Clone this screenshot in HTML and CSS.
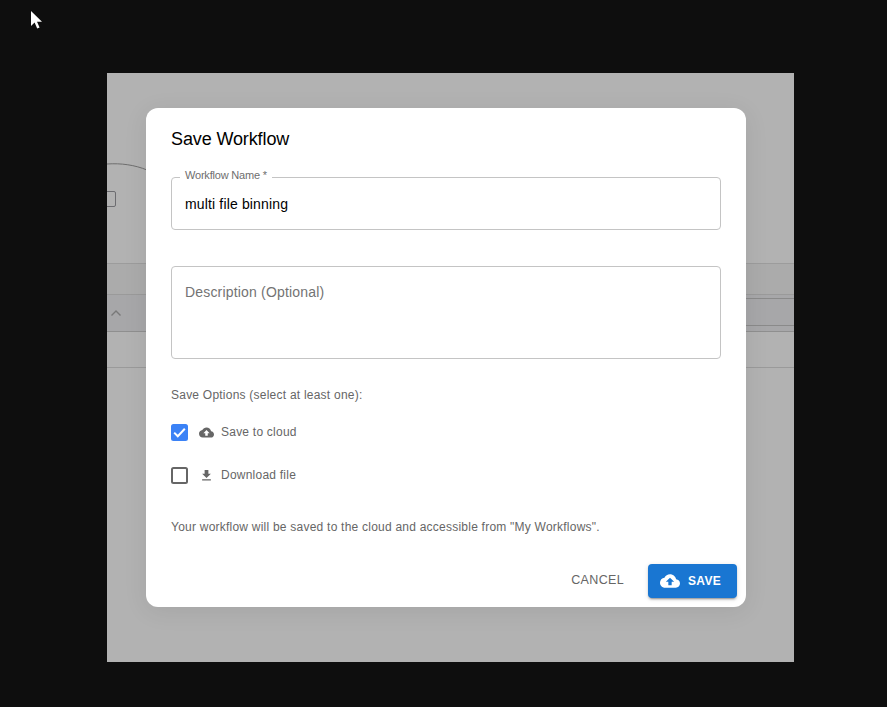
FILE: index.html
```html
<!DOCTYPE html>
<html lang="en">
<head>
<meta charset="utf-8">
<title>Save Workflow</title>
<link rel="stylesheet" href="styles.css">
</head>
<body>
<svg class="cursor" width="14" height="20" viewBox="0 0 14 20"><path d="M1 1v15l3.6-3.4 2.6 6 2.4-1-2.6-5.8h5z" fill="#fff"/></svg>
<div class="screen">
  <div class="backdrop-app">
    <svg class="edge" width="50" height="20" viewBox="0 0 50 20"><path d="M0 1C14 0 28 2 40 7" fill="none" stroke="#6e6e6e" stroke-width="1"/></svg>
    <div class="node"></div>
    <div class="band band-a"></div>
    <div class="band band-b"><svg class="chev" width="12" height="8" viewBox="0 0 12 8"><path d="M1.5 6.5 6 2l4.500 4.500" fill="none" stroke="#787878" stroke-width="1.400"/></svg></div>
    <div class="band band-c"></div>
    <div class="rail rail-top"></div>
    <div class="rail rail-bottom"></div>
  </div>
  <div class="dialog" role="dialog">
    <h2 class="title">Save Workflow</h2>
    <div class="field field-name">
      <span class="legend">Workflow Name *</span>
      <span class="value">multi file binning</span>
    </div>
    <div class="field field-desc">
      <span class="placeholder">Description (Optional)</span>
    </div>
    <p class="options-label">Save Options (select at least one):</p>
    <div class="option option-cloud">
      <span class="check check-on"><svg width="13" height="11" viewBox="0 0 13 11"><path d="M1.200 5.600 4.800 9.200 11.800 1.800" fill="none" stroke="#fff" stroke-width="2"/></svg></span>
      <span class="opt-slot"><svg width="15" height="15" viewBox="0 0 24 24"><path fill="#666" d="M19.350 10.040C18.670 6.590 15.640 4 12 4 9.110 4 6.600 5.640 5.350 8.040 2.340 8.360 0 10.910 0 14c0 3.310 2.690 6 6 6h13c2.760 0 5-2.240 5-5 0-2.640-2.050-4.780-4.650-4.960zM14 13v4h-4v-4H7l5-5 5 5h-3z"/></svg></span>
      <span class="opt-text">Save to cloud</span>
    </div>
    <div class="option option-file">
      <span class="check"></span>
      <span class="opt-slot"><svg width="15" height="15" viewBox="0 0 24 24"><path fill="#666" d="M19 9h-4V3H9v6H5l7 7 7-7zM5 18v2h14v-2H5z"/></svg></span>
      <span class="opt-text">Download file</span>
    </div>
    <p class="note">Your workflow will be saved to the cloud and accessible from "My Workflows".</p>
    <div class="actions">
      <span class="btn-cancel">CANCEL</span>
      <span class="btn-save">
        <svg width="20" height="20" viewBox="0 0 24 24"><path fill="#fff" d="M19.350 10.040C18.670 6.590 15.640 4 12 4 9.110 4 6.600 5.640 5.350 8.040 2.340 8.360 0 10.910 0 14c0 3.310 2.690 6 6 6h13c2.760 0 5-2.240 5-5 0-2.640-2.050-4.780-4.650-4.960zM14 13v4h-4v-4H7l5-5 5 5h-3z"/></svg>
        SAVE
      </span>
    </div>
  </div>
</div>
</body>
</html>
```
FILE: styles.css
```css
* { box-sizing: border-box; }
html, body { margin: 0; height: 100%; }
body {
  background: #0e0e0e;
  font-family: "Liberation Sans", Arial, sans-serif;
  overflow: hidden;
  padding: 73px 93px 45px 107px;
  position: relative;
}
.cursor { position: absolute; left: 30px; top: 10px; }
.screen {
  position: relative;
  width: 687px;
  height: 589px;
  background: #b2b2b2;
  overflow: hidden;
}
.backdrop-app { height: 100%; padding-top: 190px; }
.edge { position: absolute; left: 0; top: 90px; }
.node {
  position: absolute;
  left: -6px;
  top: 118px;
  width: 15px;
  height: 16px;
  border: 1px solid #6c6c70;
  border-radius: 2px;
}
.band { border-bottom: 1px solid #9a9a9a; }
.band-a { height: 32px; background: #ababab; border-top: 1px solid #9c9c9c; }
.band-b { height: 37px; background: #a7a7a9; padding: 14px 0 0 3px; border-bottom-color: #8f8f8f; }
.chev { display: block; }
.band-c { height: 36px; background: #b2b2b2; }
.rail { position: absolute; right: 0; width: 48px; height: 1px; background: #8a8a8a; }
.rail-top { top: 225px; }
.rail-bottom { top: 252px; }
.dialog {
  position: absolute;
  left: 39px;
  top: 35px;
  width: 600px;
  height: 499px;
  background: #fff;
  border-radius: 12px;
  padding: 20px 25px 0;
  box-shadow: 0 4px 24px rgba(0,0,0,.08);
  display: flex;
  flex-direction: column;
}
.title { margin: 0; font-size: 18px; font-weight: 400; line-height: 22px; color: #000; letter-spacing: -.12px; }
.field { border: 1px solid #c4c4c4; border-radius: 4px; padding-left: 13px; position: relative; width: 550px; }
.field-name { margin-top: 27px; height: 53px; display: flex; align-items: center; }
.field-desc { margin-top: 36px; height: 93px; padding-top: 17px; }
.legend {
  position: absolute;
  left: 8px;
  top: -10px;
  padding: 0 5px;
  background: #fff;
  font-size: 11px;
  line-height: 15px;
  color: #6e6e6e;
  letter-spacing: -.2px;
  white-space: nowrap;
}
.value { font-size: 14px; color: #000; letter-spacing: .15px; }
.placeholder { font-size: 14px; line-height: 16px; color: #737373; display: block; letter-spacing: .18px; }
.options-label { margin: 29px 0 0; font-size: 12px; line-height: 14px; color: #666; letter-spacing: .23px; }
.option { display: flex; align-items: center; height: 18px; }
.option-cloud { margin-top: 21px; }
.option-file { margin-top: 25px; }
.check {
  width: 17px;
  height: 17px;
  border: 2px solid #666;
  border-radius: 2.500px;
  display: flex;
  align-items: center;
  justify-content: center;
  flex: none;
}
.check-on { background: #3b82f6; border-color: #3b82f6; }
.opt-slot { margin-left: 10px; width: 16px; display: flex; justify-content: center; flex: none; }
.opt-text { margin-left: 7px; font-size: 12px; color: #666; letter-spacing: .23px; }
.note { margin: 36px 0 0; font-size: 12px; line-height: 14px; color: #666; letter-spacing: .23px; }
.actions { display: flex; justify-content: flex-end; align-items: center; margin: 30px -16px 0 0; }
.btn-cancel { font-size: 12.500px; line-height: 13px; padding-bottom: 2px; letter-spacing: .35px; color: #666; margin-right: 24px; }
.btn-save {
  width: 89px;
  height: 34px;
  background: #1976d2;
  border-radius: 4px;
  color: #fff;
  font-size: 12px;
  font-weight: 700;
  letter-spacing: .3px;
  display: flex;
  align-items: center;
  padding: 0 0 1px 12px;
  gap: 8px;
  box-shadow: 0 3px 1px -2px rgba(0,0,0,.2), 0 2px 2px 0 rgba(0,0,0,.14), 0 1px 5px 0 rgba(0,0,0,.12);
}
```
